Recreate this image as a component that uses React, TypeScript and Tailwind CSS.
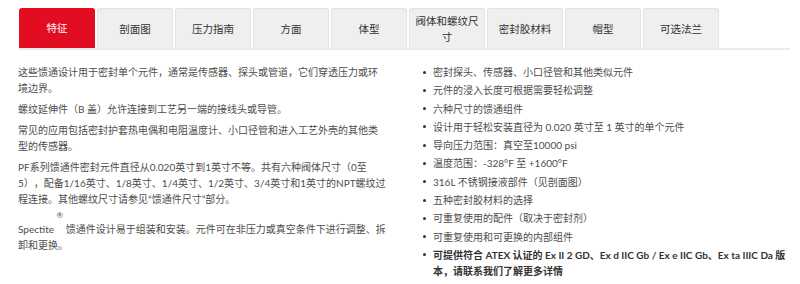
import React from 'react';

// Tab labels along the top of the product panel
const tabs = ['特征', '剖面图', '压力指南', '方面', '体型', '阀体和螺纹尺寸', '密封胶材料', '帽型', '可选法兰'];

const features = [
  '密封探头、传感器、小口径管和其他类似元件',
  '元件的浸入长度可根据需要轻松调整',
  '六种尺寸的馈通组件',
  '设计用于轻松安装直径为 0.020 英寸至 1 英寸的单个元件',
  '导向压力范围：真空至10000 psi',
  '温度范围：-328°F 至 +1600°F',
  '316L 不锈钢接液部件（见剖面图）',
  '五种密封胶材料的选择',
  '可重复使用的配件（取决于密封剂）',
  '可重复使用和可更换的内部组件',
];

export default function App() {
  return (
    <div
      className="w-[800px] h-[284px] bg-white overflow-hidden text-[#4d4d4d] [text-spacing-trim:space-all]"
      style={{ fontFamily: 'Lato, "Noto Sans CJK SC", sans-serif' }}
    >
      {/* Tabs */}
      <div className="pt-[8px] pl-[19px]">
        <div className="w-[771px] flex gap-[2px] border-b-2 border-[#ebebeb]">
          {tabs.map((tab, i) => (
            <div
              key={tab}
              className={
                i === 0
                  ? 'w-[76px] h-[40px] flex items-center justify-center px-[5px] rounded-t-[3px] bg-[#e20d20] text-white text-[10.5px] leading-[16px] text-center'
                  : 'w-[76px] h-[40px] flex items-center justify-center px-[5px] rounded-t-[3px] bg-[#efefef] border border-b-0 border-[#e2e2e2] text-[#333] text-[10.5px] leading-[16px] text-center'
              }
            >
              {tab}
            </div>
          ))}
        </div>
      </div>

      {/* Content */}
      <div className="flex mt-[14px] pl-[18px] text-[10px] leading-[16px]">
        <div className="w-[369px] flex flex-col gap-[5px]">
          <p>这些馈通设计用于密封单个元件，通常是传感器、探头或管道，它们穿透压力或环境边界。</p>
          <p>螺纹延伸件（B 盖）允许连接到工艺另一端的接线头或导管。</p>
          <p>常见的应用包括密封护套热电偶和电阻温度计、小口径管和进入工艺外壳的其他类型的传感器。</p>
          <p>
            PF系列馈通件密封元件直径从0.020英寸到1英寸不等。共有六种阀体尺寸（0至5），配备1/16英寸、1/8英寸、1/4英寸、1/2英寸、3/4英寸和1英寸的NPT螺纹过程连接。其他螺纹尺寸请参见“馈通件尺寸”部分。
          </p>
          <p className="mt-[3px]">
            Spectite <sup className="align-[11px] text-[8px] leading-none">®</sup> 馈通件设计易于组装和安装。元件可在非压力或真空条件下进行调整、拆卸和更换。
          </p>
        </div>

        <ul className="ml-[36px] w-[367px] flex flex-col gap-[2.3px]">
          {features.map((f) => (
            <li key={f} className="flex gap-[7px]">
              <span className="mt-[6.5px] w-[3px] h-[3px] rounded-full bg-[#333] shrink-0" />
              <span>{f}</span>
            </li>
          ))}
          <li className="flex gap-[7px] font-bold text-[#333]">
            <span className="mt-[6.5px] w-[3px] h-[3px] rounded-full bg-[#333] shrink-0" />
            <span>可提供符合 ATEX 认证的 Ex II 2 GD、Ex d IIC Gb / Ex e IIC Gb、Ex ta IIIC Da 版本，请联系我们了解更多详情</span>
          </li>
        </ul>
      </div>
    </div>
  );
}
